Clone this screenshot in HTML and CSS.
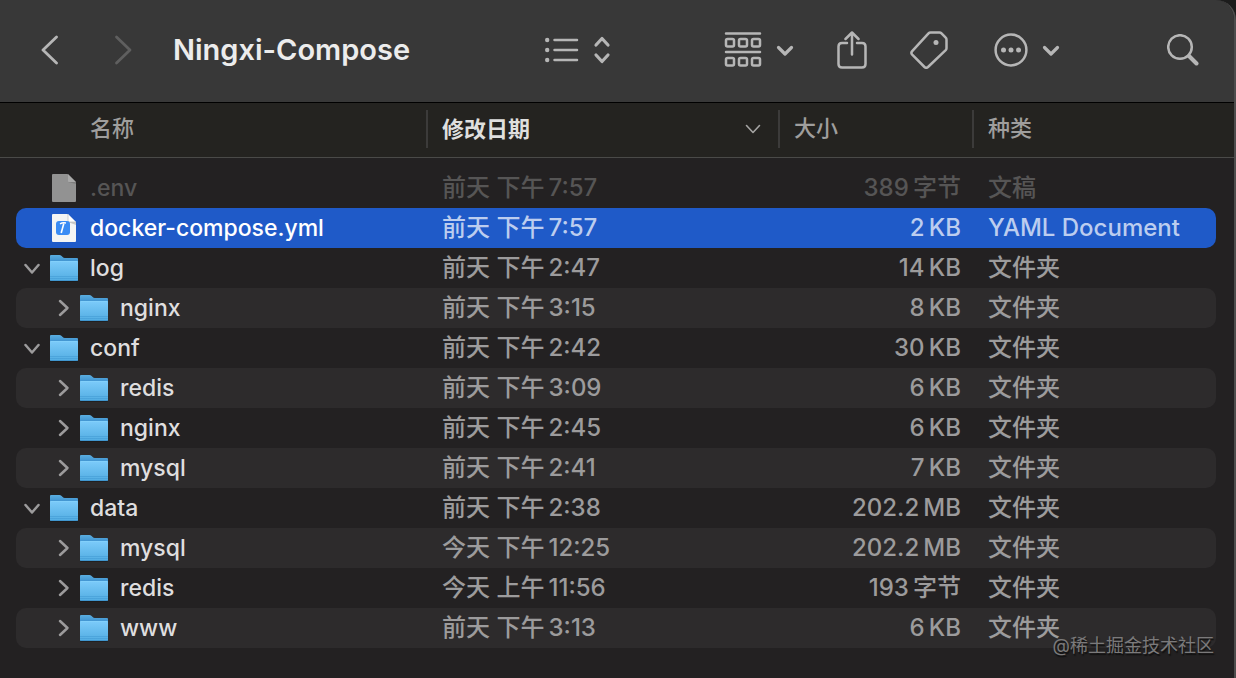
FILE: index.html
```html
<!DOCTYPE html>
<html lang="zh-CN">
<head>
<meta charset="utf-8">
<title>Ningxi-Compose</title>
<link rel="stylesheet" href="styles.css">
</head>
<body>
<svg class="defs" width="0" height="0" aria-hidden="true">
  <defs>
    <linearGradient id="folder-front" x1="0" y1="0" x2="0" y2="1">
      <stop offset="0" stop-color="#7ccbfa"/>
      <stop offset="1" stop-color="#52ade2"/>
    </linearGradient>
    <linearGradient id="folder-back" x1="0" y1="0" x2="0" y2="1">
      <stop offset="0" stop-color="#5aaee0"/>
      <stop offset="1" stop-color="#3284c8"/>
    </linearGradient>
    <symbol id="folder" viewBox="0 0 28 28">
      <path d="M0 27.500V26h28v1q0 .8-1 .8H1q-1 0-1-.8z" fill="#141414" opacity=".6"/>
      <path d="M0 2q0-1 1-1h8.500q1 0 1.800.8l1.400 1.300q.8.900 2 .9H27q1 0 1 1v6H0z" fill="url(#folder-back)"/>
      <path d="M0 8q0-1 1-1h26q1 0 1 1v18q0 1-1 1H1q-1 0-1-1z" fill="url(#folder-front)"/>
      <path d="M.5 7.500h27" stroke="#85d2fb" stroke-width=".8"/>
      <path d="M0 22.500h28M0 24.500h28" stroke="#3f97d0" stroke-width=".5"/>
      <path d="M.5 26.500h27" stroke="#3b8fc9" stroke-width=".8"/>
    </symbol>
    <symbol id="chev-right" viewBox="0 0 16 20">
      <path d="M4 3l7.500 7L4 17" class="line"/>
    </symbol>
    <symbol id="chev-down" viewBox="0 0 16 20">
      <path d="M1.500 7l6.500 7.500L14.500 7" class="line"/>
    </symbol>
  </defs>
</svg>

<main class="window">
  <header class="toolbar">
    <nav class="nav">
      <button class="tool" aria-label="后退"><svg width="18" height="30" viewBox="0 0 18 30"><path d="M16.500 2L3 15l13.500 13" class="line w28"/></svg></button>
      <button class="tool" aria-label="前进" disabled><svg width="18" height="30" viewBox="0 0 18 30"><path d="M2.500 2L16 15 2.500 28" class="line w28"/></svg></button>
      <h1 class="title">Ningxi-Compose</h1>
    </nav>
    <button class="tool view" aria-label="显示方式">
      <svg width="34" height="26" viewBox="0 0 34 26"><path d="M9.500 3h22.500M9.500 13h22.500M9.500 23h22.500" class="line"/><g fill="currentColor"><circle cx="2.200" cy="3" r="2.200"/><circle cx="2.200" cy="13" r="2.200"/><circle cx="2.200" cy="23" r="2.200"/></g></svg>
      <svg width="18" height="28" viewBox="0 0 18 28"><path d="M3 9l6-6.500L15 9M3 19l6 6.500 6-6.500" class="line w32"/></svg>
    </button>
    <button class="tool group" aria-label="分组">
      <svg width="38" height="36" viewBox="0 0 38 36"><g class="line"><path d="M2 1.500h34M2 20h34" /><rect x="2" y="7" width="8" height="7.600" rx="1.500"/><rect x="15" y="7" width="8" height="7.600" rx="1.500"/><rect x="28" y="7" width="8" height="7.600" rx="1.500"/><rect x="2" y="26" width="8" height="7.600" rx="1.500"/><rect x="15" y="26" width="8" height="7.600" rx="1.500"/><rect x="28" y="26" width="8" height="7.600" rx="1.500"/></g></svg>
      <svg width="18" height="14" viewBox="0 0 18 14"><path d="M2.500 4.500L9 11l6.500-6.500" class="line w32"/></svg>
    </button>
    <button class="tool share" aria-label="共享">
      <svg width="30" height="38" viewBox="0 0 30 38"><path d="M10 12H5q-3.500 0-3.500 3.500v17.500q0 3.500 3.500 3.500h20q3.500 0 3.500-3.500v-17.500q0-3.500-3.500-3.500h-5M15 23.500V2M8.500 8L15 1.500 21.500 8" class="line"/></svg>
    </button>
    <button class="tool tag" aria-label="标签">
      <svg width="38" height="38" viewBox="0 0 38 38"><path d="M20.500 1.500h9q1.200 0 2 .8l4.200 4.400q.8.800.8 2v8.500q0 1.200-.8 2L18 36q-1.800 1.500-3.500 0L2.200 23.700q-1.600-1.700 0-3.500L18.500 2.400q.9-.9 2-.9z" class="line"/><circle cx="26" cy="11.500" r="2.500" fill="currentColor"/></svg>
    </button>
    <button class="tool more" aria-label="更多">
      <svg width="34" height="34" viewBox="0 0 34 34"><circle cx="17" cy="17" r="15.400" class="line"/><g fill="currentColor"><circle cx="9.500" cy="17" r="2.500"/><circle cx="17" cy="17" r="2.500"/><circle cx="24.500" cy="17" r="2.500"/></g></svg>
      <svg width="18" height="14" viewBox="0 0 18 14"><path d="M2.500 4.500L9 11l6.500-6.500" class="line w32"/></svg>
    </button>
    <button class="tool search" aria-label="搜索">
      <svg width="32" height="32" viewBox="0 0 32 32"><circle cx="13" cy="13" r="11.800" class="line"/><path d="M22 22l7.500 7.500" class="line w40"/></svg>
    </button>
  </header>

  <table class="files">
    <thead>
      <tr>
        <th class="name">名称</th>
        <th class="date sorted"><span>修改日期</span><svg width="16" height="10" viewBox="0 0 16 10"><path d="M1.500 1.500L8 8.500l6.500-7" class="line thin"/></svg></th>
        <th class="size">大小</th>
        <th class="kind">种类</th>
      </tr>
    </thead>
    <tbody>
      <tr class="hidden-file">
        <td class="name"><svg class="icon" viewBox="0 0 28 28"><path d="M2 1q0-1 1-1h14.500L26 8.500V27q0 1-1 1H3q-1 0-1-1z" fill="#929292"/><path d="M18 8h8v2z" fill="#7d7d7d"/><path d="M18 0v7q0 1 1 1h7z" fill="#a9a9a9"/></svg>.env</td>
        <td class="date">前天 下午&#8201;7:57</td><td class="size">389&#8201;字节</td><td class="kind">文稿</td>
      </tr>
      <tr class="selected">
        <td class="name"><svg class="icon" viewBox="0 0 28 28"><path d="M2 1q0-1 1-1h14.500L26 8.500V27q0 1-1 1H3q-1 0-1-1z" fill="#f4f4f4"/><path d="M18 8h8v3z" fill="#c9c9c9"/><path d="M18 0v7q0 1 1 1h7z" fill="#fff"/><path d="M18 0v7q0 1 1 1h7" fill="none" stroke="#bdbdbd" stroke-width=".7"/><rect x="6" y="7" width="14" height="14" rx="3" fill="#3a8bf4"/><path d="M10 9.800q2.500-1.500 6-.8" stroke="#fff" stroke-width="1.400" fill="none"/><path d="M13.800 9.500L11.200 19" stroke="#fff" stroke-width="1.600" fill="none"/></svg>docker-compose.yml</td>
        <td class="date">前天 下午&#8201;7:57</td><td class="size">2&#8201;KB</td><td class="kind">YAML Document</td>
      </tr>
      <tr>
        <td class="name"><button class="twist" aria-label="折叠" aria-expanded="true"><svg><use href="#chev-down"/></svg></button><svg class="icon"><use href="#folder"/></svg>log</td>
        <td class="date">前天 下午&#8201;2:47</td><td class="size">14&#8201;KB</td><td class="kind">文件夹</td>
      </tr>
      <tr>
        <td class="name child"><button class="twist" aria-label="展开" aria-expanded="false"><svg><use href="#chev-right"/></svg></button><svg class="icon"><use href="#folder"/></svg>nginx</td>
        <td class="date">前天 下午&#8201;3:15</td><td class="size">8&#8201;KB</td><td class="kind">文件夹</td>
      </tr>
      <tr>
        <td class="name"><button class="twist" aria-label="折叠" aria-expanded="true"><svg><use href="#chev-down"/></svg></button><svg class="icon"><use href="#folder"/></svg>conf</td>
        <td class="date">前天 下午&#8201;2:42</td><td class="size">30&#8201;KB</td><td class="kind">文件夹</td>
      </tr>
      <tr>
        <td class="name child"><button class="twist" aria-label="展开" aria-expanded="false"><svg><use href="#chev-right"/></svg></button><svg class="icon"><use href="#folder"/></svg>redis</td>
        <td class="date">前天 下午&#8201;3:09</td><td class="size">6&#8201;KB</td><td class="kind">文件夹</td>
      </tr>
      <tr>
        <td class="name child"><button class="twist" aria-label="展开" aria-expanded="false"><svg><use href="#chev-right"/></svg></button><svg class="icon"><use href="#folder"/></svg>nginx</td>
        <td class="date">前天 下午&#8201;2:45</td><td class="size">6&#8201;KB</td><td class="kind">文件夹</td>
      </tr>
      <tr>
        <td class="name child"><button class="twist" aria-label="展开" aria-expanded="false"><svg><use href="#chev-right"/></svg></button><svg class="icon"><use href="#folder"/></svg>mysql</td>
        <td class="date">前天 下午&#8201;2:41</td><td class="size">7&#8201;KB</td><td class="kind">文件夹</td>
      </tr>
      <tr>
        <td class="name"><button class="twist" aria-label="折叠" aria-expanded="true"><svg><use href="#chev-down"/></svg></button><svg class="icon"><use href="#folder"/></svg>data</td>
        <td class="date">前天 下午&#8201;2:38</td><td class="size">202.2&#8201;MB</td><td class="kind">文件夹</td>
      </tr>
      <tr>
        <td class="name child"><button class="twist" aria-label="展开" aria-expanded="false"><svg><use href="#chev-right"/></svg></button><svg class="icon"><use href="#folder"/></svg>mysql</td>
        <td class="date">今天 下午&#8201;12:25</td><td class="size">202.2&#8201;MB</td><td class="kind">文件夹</td>
      </tr>
      <tr>
        <td class="name child"><button class="twist" aria-label="展开" aria-expanded="false"><svg><use href="#chev-right"/></svg></button><svg class="icon"><use href="#folder"/></svg>redis</td>
        <td class="date">今天 上午&#8201;11:56</td><td class="size">193&#8201;字节</td><td class="kind">文件夹</td>
      </tr>
      <tr>
        <td class="name child"><button class="twist" aria-label="展开" aria-expanded="false"><svg><use href="#chev-right"/></svg></button><svg class="icon"><use href="#folder"/></svg>www</td>
        <td class="date">前天 下午&#8201;3:13</td><td class="size">6&#8201;KB</td><td class="kind">文件夹</td>
      </tr>
    </tbody>
  </table>
  <p class="watermark">@稀土掘金技术社区</p>
</main>
</body>
</html>
```
FILE: styles.css
```css
* { box-sizing: border-box; }

body {
  margin: 0;
  background: #1c1c1c;
  color: #dfdedf;
  font-family: Inter, "Noto Sans CJK SC", sans-serif;
  font-size: 24px;
}

.defs { position: absolute; }

.window {
  position: relative;
  min-height: 100vh;
  background: #232122;
  border-right: 2px solid #4d4d4d;
  border-top-right-radius: 20px;
  overflow: hidden;
}

button {
  padding: 0;
  border: 0;
  background: none;
  color: inherit;
  font: inherit;
}

.line {
  fill: none;
  stroke: currentColor;
  stroke-width: 2.5;
  stroke-linecap: round;
  stroke-linejoin: round;
}
.w28 { stroke-width: 2.8; }
.w32 { stroke-width: 3.2; }
.w40 { stroke-width: 4; }
.thin { stroke-width: 1.6; }

.toolbar {
  display: flex;
  align-items: center;
  height: 103px;
  padding: 0 35px 3px 40px;
  background: #383838;
  border-bottom: 1px solid #000;
  color: #b6b6b6;
}

.nav {
  display: flex;
  flex: 1;
  align-items: center;
}
.nav .tool + .tool { margin-left: 56px; }

.title {
  margin: 0 0 0 41px;
  color: #ececec;
  font-size: 29px;
  font-weight: 600;
  line-height: 40px;
  white-space: nowrap;
}

.tool {
  display: flex;
  align-items: center;
  gap: 14px;
}
.tool:disabled { color: #5f5f5f; }
.group { margin-left: 113px; }
.share { margin-left: 43px; }
.tag { margin-left: 43px; }
.more { margin-left: 46px; }
.search { margin-left: 107px; }

.files,
.files thead,
.files tbody { display: block; }

.files tr {
  display: grid;
  grid-template-columns: minmax(0, 1fr) 352px 194px 244px;
}

.files thead tr {
  align-items: center;
  height: 55px;
  padding: 0 18px 2px 16px;
  background: #242320;
  border-bottom: 1px solid #4a4a48;
}

th {
  height: 38px;
  padding: 0 14px;
  border-left: 2px solid #3c3b3a;
  color: #9f9e9d;
  font-size: 22px;
  font-weight: 500;
  line-height: 36px;
  text-align: left;
}
th.name {
  padding-left: 74px;
  border-left: 0;
}
th.sorted {
  display: flex;
  align-items: center;
  justify-content: space-between;
  padding-right: 17px;
  color: #dfdfde;
  font-weight: 700;
}
th.sorted svg { color: #a5a4a3; }

.files tbody { padding: 10px 18px 10px 16px; }

.files tbody tr {
  height: 40px;
  border-radius: 10px;
  color: #9c9b9c;
}
.files tbody tr:nth-child(even) { background: #2d2b2c; }

td {
  padding: 0 16px;
  font-weight: 500;
  line-height: 40px;
  white-space: nowrap;
}

td.name {
  display: flex;
  align-items: center;
  padding: 0 0 0 34px;
  color: #dfdedf;
  font-size: 23px;
}
td.name:has(.twist) { padding-left: 8px; }
td.name.child { padding-left: 40px; }

td.size {
  padding-right: 11px;
  text-align: right;
}

.icon {
  width: 28px;
  height: 28px;
  margin-right: 12px;
}

.twist {
  display: flex;
  margin-right: 10px;
  color: #9c9b9c;
}
.child .twist { margin-right: 8px; }
.twist svg {
  width: 16px;
  height: 20px;
}

.files tbody .hidden-file,
.hidden-file td.name { color: #565555; }

.files tbody tr.selected:nth-child(n) {
  background: #1f5ac8;
  color: #bccdef;
}
.selected td.name { color: #fff; }

.watermark {
  position: absolute;
  right: 20px;
  bottom: 20px;
  margin: 0;
  color: #7b7a7b;
  font-size: 18px;
  line-height: 24px;
  text-shadow: 1px 2px 1px #111;
}
```
